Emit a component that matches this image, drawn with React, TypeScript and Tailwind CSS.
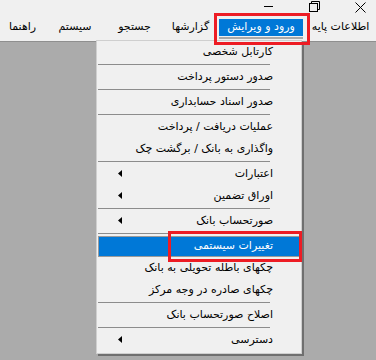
import React from "react";

const font = { fontFamily: '"DejaVu Sans", "Noto Sans", sans-serif' };

type Item = { t: string; arrow?: boolean; sepAfter?: boolean; active?: boolean };

const items: Item[] = [
  { t: "کارتابل شخصی", sepAfter: true },
  { t: "صدور دستور پرداخت", sepAfter: true },
  { t: "صدور اسناد حسابداری", sepAfter: true },
  { t: "عملیات دریافت / پرداخت" },
  { t: "واگذاری به بانک / برگشت چک", sepAfter: true },
  { t: "اعتبارات", arrow: true },
  { t: "اوراق تضمین", arrow: true, sepAfter: true },
  { t: "صورتحساب بانک", arrow: true, sepAfter: true },
  { t: "تغییرات سیستمی", active: true },
  { t: "چکهای باطله تحویلی به بانک" },
  { t: "چکهای صادره در وجه مرکز", sepAfter: true },
  { t: "اصلاح صورتحساب بانک", sepAfter: true },
  { t: "دسترسی", arrow: true },
];

function Arrow({ color = "#000" }: { color?: string }) {
  return (
    <svg width="4" height="7" viewBox="0 0 4 7" className="block">
      <polygon points="4,0 4,7 0,3.5" fill={color} />
    </svg>
  );
}

export default function App() {
  return (
    <div
      className="relative w-[376px] h-[360px] overflow-hidden bg-[#ababab] text-[11px] text-black"
      style={font}
    >
      {/* title bar */}
      <div className="h-[14px] bg-[#f0f0f0] flex justify-end mr-[-7px]">
        <div className="w-[46px] flex justify-center items-start pt-[6px]">
          <div className="w-[9px] h-[1px] bg-black" />
        </div>
        <div className="w-[46px] flex justify-center items-start pt-[1px]">
          <svg width="11" height="11" viewBox="0 0 11 11">
            <rect x="0.5" y="2.5" width="8" height="8" fill="none" stroke="#000" />
            <path d="M2.5 2.5 V0.5 H10.5 V8.5 H8.5" fill="none" stroke="#000" />
          </svg>
        </div>
        <div className="w-[46px] flex justify-center items-start pt-[2px]">
          <svg width="11" height="11" viewBox="0 0 11 11">
            <path d="M0.5 0.5 L10.5 10.5 M10.5 0.5 L0.5 10.5" stroke="#000" strokeWidth="1" />
          </svg>
        </div>
      </div>

      {/* menu bar */}
      <div dir="rtl" className="h-[27px] bg-[#f0f0f0] flex items-start pt-[5px]">
        <div className="w-[71px] h-[17px] flex items-center justify-center">اطلاعات پایه</div>
        <div className="w-[84px] mr-[2px] flex flex-col">
          <div className="h-[17px] bg-[#0078d7] text-white flex items-center justify-center">
            ورود و ویرایش
          </div>
          <div className="h-[2px] mt-[1px] bg-[#a9a9a9]" />
        </div>
        <div className="w-[57px] h-[17px] flex items-center justify-center">گزارشها</div>
        <div className="w-[55px] h-[17px] flex items-center justify-center">جستجو</div>
        <div className="w-[64px] h-[17px] flex items-center justify-center">سیستم</div>
        <div className="w-[41px] h-[17px] flex items-center justify-center">راهنما</div>
      </div>

      {/* workspace top line */}
      <div className="h-[1px] bg-[#8f8f8f]" />

      {/* dropdown */}
      <div className="absolute left-[96px] top-[40px] w-[206px] h-[314px] bg-[#f0f0f0] border border-[#cfcfcf] shadow-[2px_2px_0_#6f6f6f] pb-[1px]">
        {items.map((it, i) => (
          <React.Fragment key={i}>
            <div className="h-[22px] relative">
              {it.active ? (
                <div
                  dir="rtl"
                  className="absolute left-[1px] right-0 top-[1px] bottom-0 bg-[#0078d7] border border-[#9a9a9a] text-white flex items-center pr-[27px]"
                >
                  {it.t}
                </div>
              ) : (
                <div dir="rtl" className="h-full flex items-center pr-[28px]">
                  {it.t}
                </div>
              )}
              {it.arrow && (
                <div className="absolute left-[21px] top-[7px]">
                  <Arrow />
                </div>
              )}
            </div>
            {it.sepAfter && (
              <div className="h-[3px] pt-[1px]">
                <div className="ml-[1px] w-[172px] h-[1px] bg-[#8c8c8c]" />
              </div>
            )}
          </React.Fragment>
        ))}
      </div>

      {/* red annotation boxes */}
      <div className="absolute left-[214px] top-[13px] w-[96px] h-[32px] border-[3px] border-[#ed1c24]" />
      <div className="absolute left-[168px] top-[231px] w-[134px] h-[31px] border-[3px] border-[#ed1c24]" />
    </div>
  );
}
